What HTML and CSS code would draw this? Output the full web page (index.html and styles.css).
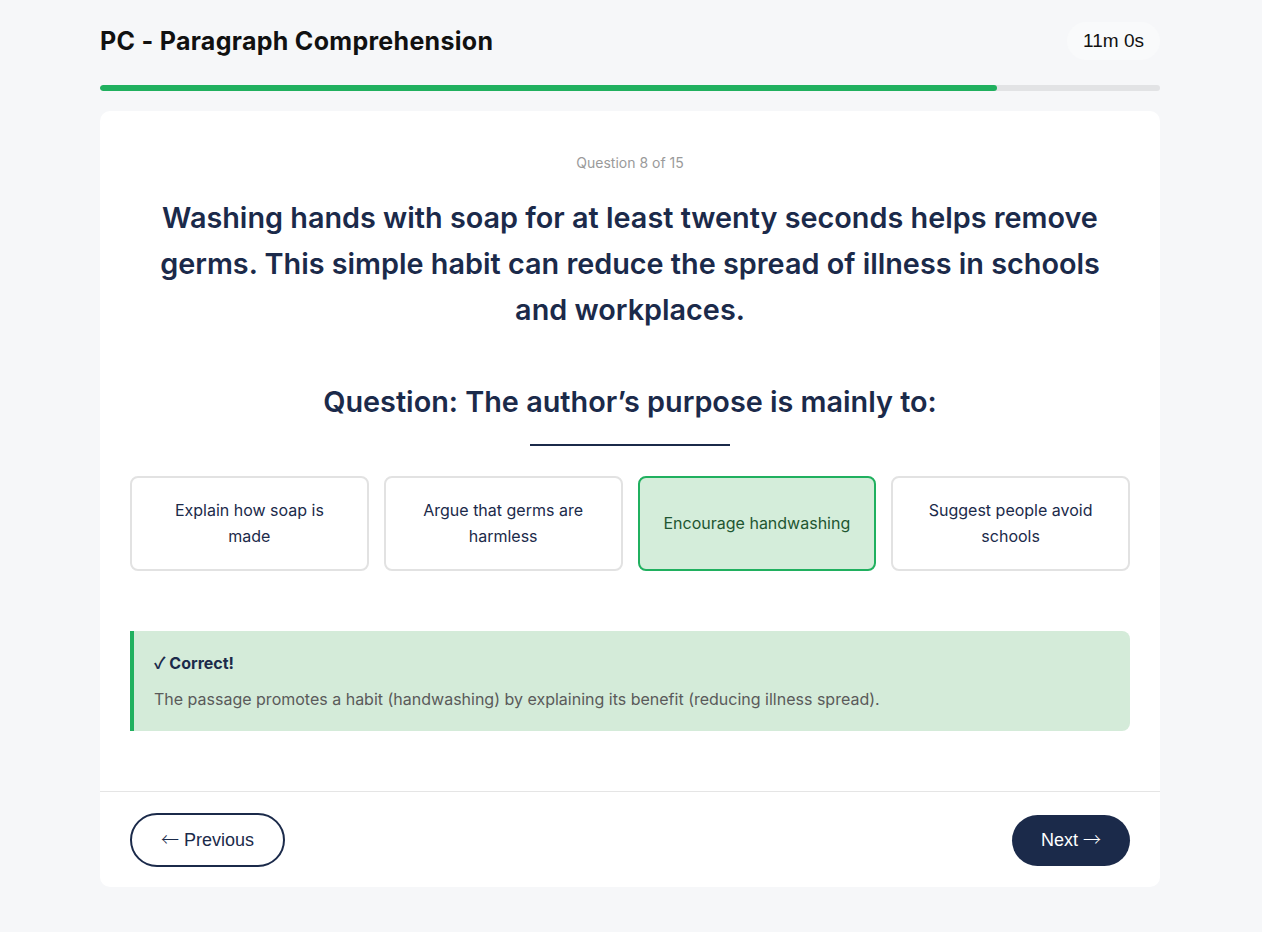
FILE: index.html
```html
<!DOCTYPE html>
<html lang="en">
<head>
<meta charset="utf-8">
<title>PC - Paragraph Comprehension</title>
<link rel="stylesheet" href="styles.css">
</head>
<body>
<div class="page">
  <header class="topbar">
    <h1 class="title">PC - Paragraph Comprehension</h1>
    <div class="timer">11m 0s</div>
  </header>
  <div class="progress"><div class="progress-fill" style="width: 84.6%"></div></div>
  <main class="card">
    <div class="card-body">
      <div class="counter">Question 8 of 15</div>
      <p class="passage">Washing hands with soap for at least twenty seconds helps remove germs. This simple habit can reduce the spread of illness in schools and workplaces.</p>
      <h2 class="question">Question: The author’s purpose is mainly to:</h2>
      <div class="rule"></div>
      <div class="options">
        <button class="option">Explain how soap is made</button>
        <button class="option">Argue that germs are harmless</button>
        <button class="option selected">Encourage handwashing</button>
        <button class="option">Suggest people avoid schools</button>
      </div>
      <div class="feedback">
        <div class="feedback-title"><span class="check">✓</span> Correct!</div>
        <div class="feedback-text">The passage promotes a habit (handwashing) by explaining its benefit (reducing illness spread).</div>
      </div>
    </div>
    <footer class="card-footer">
      <button class="btn btn-outline"><span class="arrow">←</span> Previous</button>
      <button class="btn btn-solid">Next <span class="arrow">→</span></button>
    </footer>
  </main>
</div>
</body>
</html>
```

FILE: styles.css
```css
* { box-sizing: border-box; }
html, body { margin: 0; padding: 0; }
body {
  background: #f6f7f9;
  font-family: Inter, "Noto Sans", sans-serif;
  color: #1b2a4a;
}
.page {
  width: 1060px;
  margin-left: 100px;
  padding-top: 22px;
}
.topbar {
  display: flex;
  align-items: center;
  justify-content: space-between;
  height: 38px;
}
.title {
  margin: 0;
  font-family: Inter, sans-serif;
  font-weight: 700;
  font-size: 25px;
  letter-spacing: 0.3px;
  color: #111;
}
.timer {
  font-family: "Liberation Sans", Arial, sans-serif;
  font-size: 19px;
  color: #111;
  background: #f9fafb;
  border-radius: 19px;
  padding: 9px 16px;
  line-height: 20px;
}
.progress {
  margin-top: 25px;
  height: 6px;
  background: #e2e3e5;
  border-radius: 3px;
  overflow: hidden;
}
.progress-fill {
  height: 100%;
  background: #20b05f;
  border-radius: 3px;
}
.card {
  margin-top: 20px;
  background: #fff;
  border-radius: 10px;
  overflow: hidden;
}
.card-body {
  padding: 42px 30px 60px;
  display: flex;
  flex-direction: column;
  align-items: center;
}
.counter {
  font-size: 14px;
  line-height: 20px;
  color: #9a9a9a;
}
.passage {
  margin: 22px 0 0;
  padding: 0 16px;
  font-size: 28.8px;
  font-weight: 600;
  line-height: 46px;
  text-align: center;
  color: #1b2a4a;
}
.question {
  margin: 49px 0 0;
  font-size: 28.8px;
  font-weight: 600;
  line-height: 40px;
  text-align: center;
  color: #1b2a4a;
}
.rule {
  width: 200px;
  height: 2px;
  background: #1b2a4a;
  margin-top: 22px;
}
.options {
  align-self: stretch;
  margin-top: 30px;
  display: grid;
  grid-template-columns: repeat(4, 1fr);
  gap: 15px;
}
.option {
  height: 95px;
  border: 2px solid #e2e2e2;
  border-radius: 8px;
  background: #fff;
  font-family: Inter, sans-serif;
  font-size: 16px;
  line-height: 26px;
  color: #1b2a4a;
  padding: 0 23px 2px;
  text-align: center;
}
.option.selected {
  background: #d4edda;
  border-color: #20b05f;
  color: #1e5631;
}
.feedback {
  align-self: stretch;
  margin-top: 60px;
  background: #d4ebd9;
  border-left: 4px solid #20b05f;
  border-radius: 0 8px 8px 0;
  padding: 20px 20px 20px;
}
.feedback-title {
  height: 24px;
  font-size: 16px;
  font-weight: 700;
  line-height: 24px;
  color: #1b2a4a;
}
.check {
  font-family: "Noto Sans CJK JP", "DejaVu Sans", sans-serif;
  font-weight: 700;
  line-height: 1;
}
.feedback-text {
  margin-top: 12px;
  font-size: 16px;
  line-height: 24px;
  color: #5a5a5a;
}
.card-footer {
  border-top: 1px solid #e5e5e5;
  padding: 21px 30px 20px;
  display: flex;
  justify-content: space-between;
  align-items: center;
}
.btn {
  font-family: "Liberation Sans", Arial, sans-serif;
  font-size: 18px;
  border-radius: 27px;
  cursor: pointer;
}
.arrow {
  font-family: "Noto Sans CJK JP", "DejaVu Sans", sans-serif;
  font-weight: 300;
  line-height: 1;
}
.btn-outline {
  height: 54px;
  padding: 0 29px;
  background: #fff;
  border: 2px solid #1b2a4a;
  color: #1b2a4a;
}
.btn-solid {
  height: 51px;
  padding: 0 29px;
  background: #1b2a4a;
  border: none;
  color: #fff;
}
```
